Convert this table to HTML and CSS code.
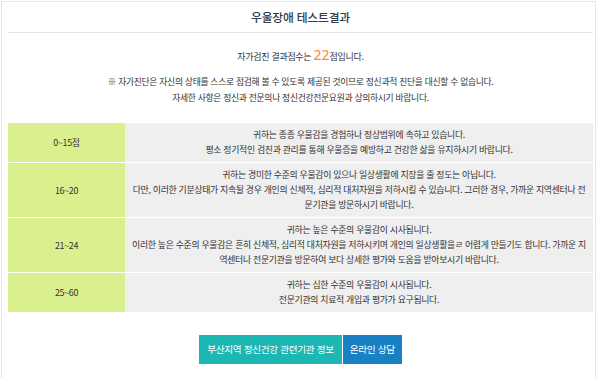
FILE: index.html
```html
<!DOCTYPE html>
<html lang="ko">
<head>
<meta charset="utf-8">
<title>우울장애 테스트결과</title>
<link rel="stylesheet" href="styles.css">
</head>
<body>
<div class="page">
  <h1 class="title">우울장애 테스트결과</h1>
  <p class="score">자가검진 결과점수는 <em class="score-num">22</em>점입니다.</p>
  <div class="notice">
    <p>※ 자가진단은 자신의 상태를 스스로 점검해 볼 수 있도록 제공된 것이므로 정신과적 진단을 대신할 수 없습니다.</p>
    <p>자세한 사항은 정신과 전문의나 정신건강전문요원과 상의하시기 바랍니다.</p>
  </div>
  <table class="result">
    <tr>
      <th>0~15점</th>
      <td>귀하는 종종 우울감을 경험하나 정상범위에 속하고 있습니다.<br>평소 정기적인 검진과 관리를 통해 우울증을 예방하고 건강한 삶을 유지하시기 바랍니다.</td>
    </tr>
    <tr>
      <th>16~20</th>
      <td>귀하는 경미한 수준의 우울감이 있으나 일상생활에 지장을 줄 정도는 아닙니다.<br>다만, 이러한 기분상태가 지속될 경우 개인의 신체적, 심리적 대처자원을 저하시킬 수 있습니다. 그러한 경우, 가까운 지역센터나 전문기관을 방문하시기 바랍니다.</td>
    </tr>
    <tr>
      <th>21~24</th>
      <td>귀하는 높은 수준의 우울감이 시사됩니다.<br>이러한 높은 수준의 우울감은 흔히 신체적, 심리적 대처자원을 저하시키며 개인의 일상생활을ㄹ 어렵게 만들기도 합니다. 가까운 지역센터나 전문기관을 방문하여 보다 상세한 평가와 도움을 받아보시기 바랍니다.</td>
    </tr>
    <tr>
      <th>25~60</th>
      <td>귀하는 심한 수준의 우울감이 시사됩니다.<br>전문기관의 치료적 개입과 평가가 요구됩니다.</td>
    </tr>
  </table>
  <div class="buttons">
    <a class="btn btn-teal" href="#">부산지역 정신건강 관련기관 정보</a>
    <a class="btn btn-blue" href="#">온라인 상담</a>
  </div>
</div>
</body>
</html>
```
FILE: styles.css
```css
html, body {
  margin: 0;
  padding: 0;
  background: #ffffff;
}
body {
  font-family: "Noto Sans CJK KR", "Noto Sans", sans-serif;
  color: #444;
}
.page {
  margin: 1px 4px 0 1px;
  border: 1px solid #e6e6e6;
  padding: 0 2px 14px 6px;
}
.title {
  margin: 0;
  height: 30px;
  line-height: 30px;
  font-size: 11.8px;
  font-weight: 500;
  letter-spacing: -0.2px;
  text-align: center;
  color: #2e3b4c;
  border-bottom: 1px solid #e4e4e4;
}
.score {
  margin: 12px 0 0;
  line-height: 20px;
  font-size: 9px;
  letter-spacing: -0.3px;
  text-align: center;
  color: #333;
}
.score-num {
  font-style: normal;
  font-family: "Noto Sans", sans-serif;
  font-size: 14px;
  color: #f5893a;
  letter-spacing: 0;
}
.notice {
  margin-top: 7px;
  font-size: 8.8px;
  letter-spacing: -0.3px;
  line-height: 16px;
  text-align: center;
  color: #333;
}
.notice p {
  margin: 0;
}
.result {
  margin-top: 17px;
  width: 100%;
  border-collapse: collapse;
  font-size: 8.9px;
  letter-spacing: -0.3px;
  line-height: 15px;
  color: #333;
}
.result th {
  width: 117px;
  background: #daf08f;
  font-weight: normal;
  text-align: center;
  border-bottom: 1px solid #ffffff;
  padding: 0;
}
.result td {
  background: #efefef;
  text-align: center;
  border-bottom: 1px solid #ffffff;
  padding: 4px 5px 5px;
}
.result tr:last-child th,
.result tr:last-child td {
  border-bottom: 0;
}
.buttons {
  margin-top: 23px;
  display: flex;
  justify-content: center;
  gap: 1px;
}
.btn {
  display: block;
  height: 29px;
  line-height: 29px;
  font-size: 9.6px;
  letter-spacing: -0.3px;
  color: #ffffff;
  text-decoration: none;
}
.btn-teal {
  background: #1cb6b3;
  padding: 0 8px;
}
.btn-blue {
  background: #1a80c4;
  padding: 0 7px;
}
```
